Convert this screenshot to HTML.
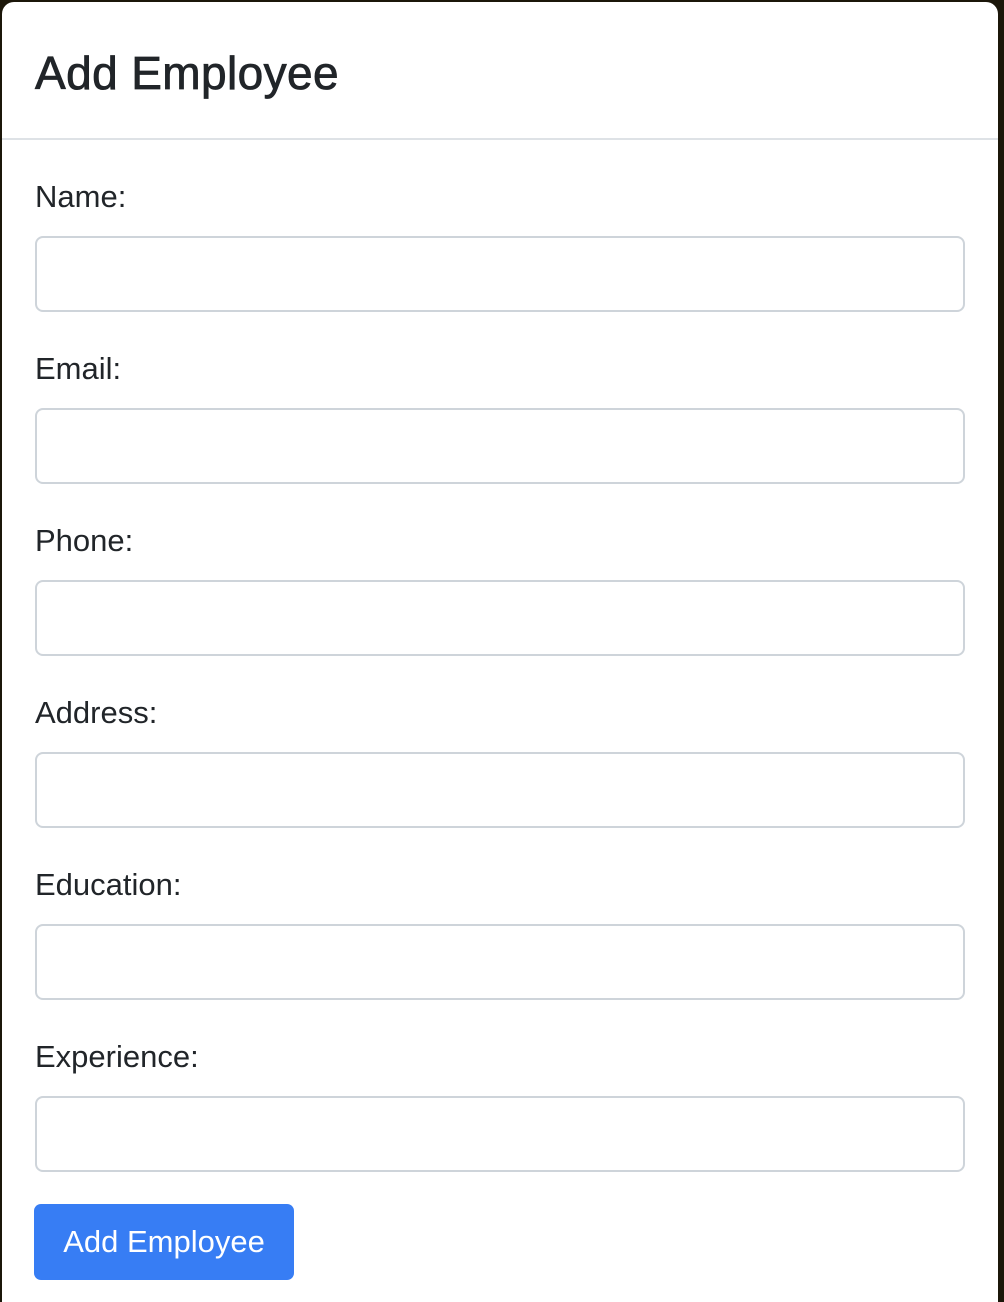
<!DOCTYPE html>
<html><head><style>
html,body{margin:0;padding:0;width:1004px;height:1294px;overflow:hidden;background:#1b1609;font-family:"Liberation Sans",sans-serif;}
.modal{position:absolute;left:2px;top:2px;width:996px;height:1300px;background:#fff;border-radius:12px 12px 0 0;}
h1{position:absolute;left:33px;top:44px;margin:0;font-size:46px;font-weight:normal;color:#212529;line-height:54px;letter-spacing:0.4px;-webkit-text-stroke:0.8px #212529;}
.hr{position:absolute;left:0;top:136px;width:996px;height:2px;background:#dee2e6;}
.lbl{position:absolute;left:33px;font-size:31px;color:#212529;line-height:36px;}
.inp{position:absolute;left:33px;width:926px;height:72px;border:2px solid #ced4da;border-radius:8px;box-sizing:content-box;}
.btn{position:absolute;left:32px;top:1202px;width:260px;height:76px;background:#377df4;border-radius:7px;color:#fff;font-size:31px;line-height:76px;text-align:center;}
</style></head><body>
<div class="modal">
<h1>Add Employee</h1>
<div class="hr"></div>
<div class="lbl" style="top:177px">Name:</div><div class="inp" style="top:234px"></div>
<div class="lbl" style="top:349px">Email:</div><div class="inp" style="top:406px"></div>
<div class="lbl" style="top:521px">Phone:</div><div class="inp" style="top:578px"></div>
<div class="lbl" style="top:693px">Address:</div><div class="inp" style="top:750px"></div>
<div class="lbl" style="top:865px">Education:</div><div class="inp" style="top:922px"></div>
<div class="lbl" style="top:1037px">Experience:</div><div class="inp" style="top:1094px"></div>
<div class="btn">Add Employee</div>
</div>
</body></html>
